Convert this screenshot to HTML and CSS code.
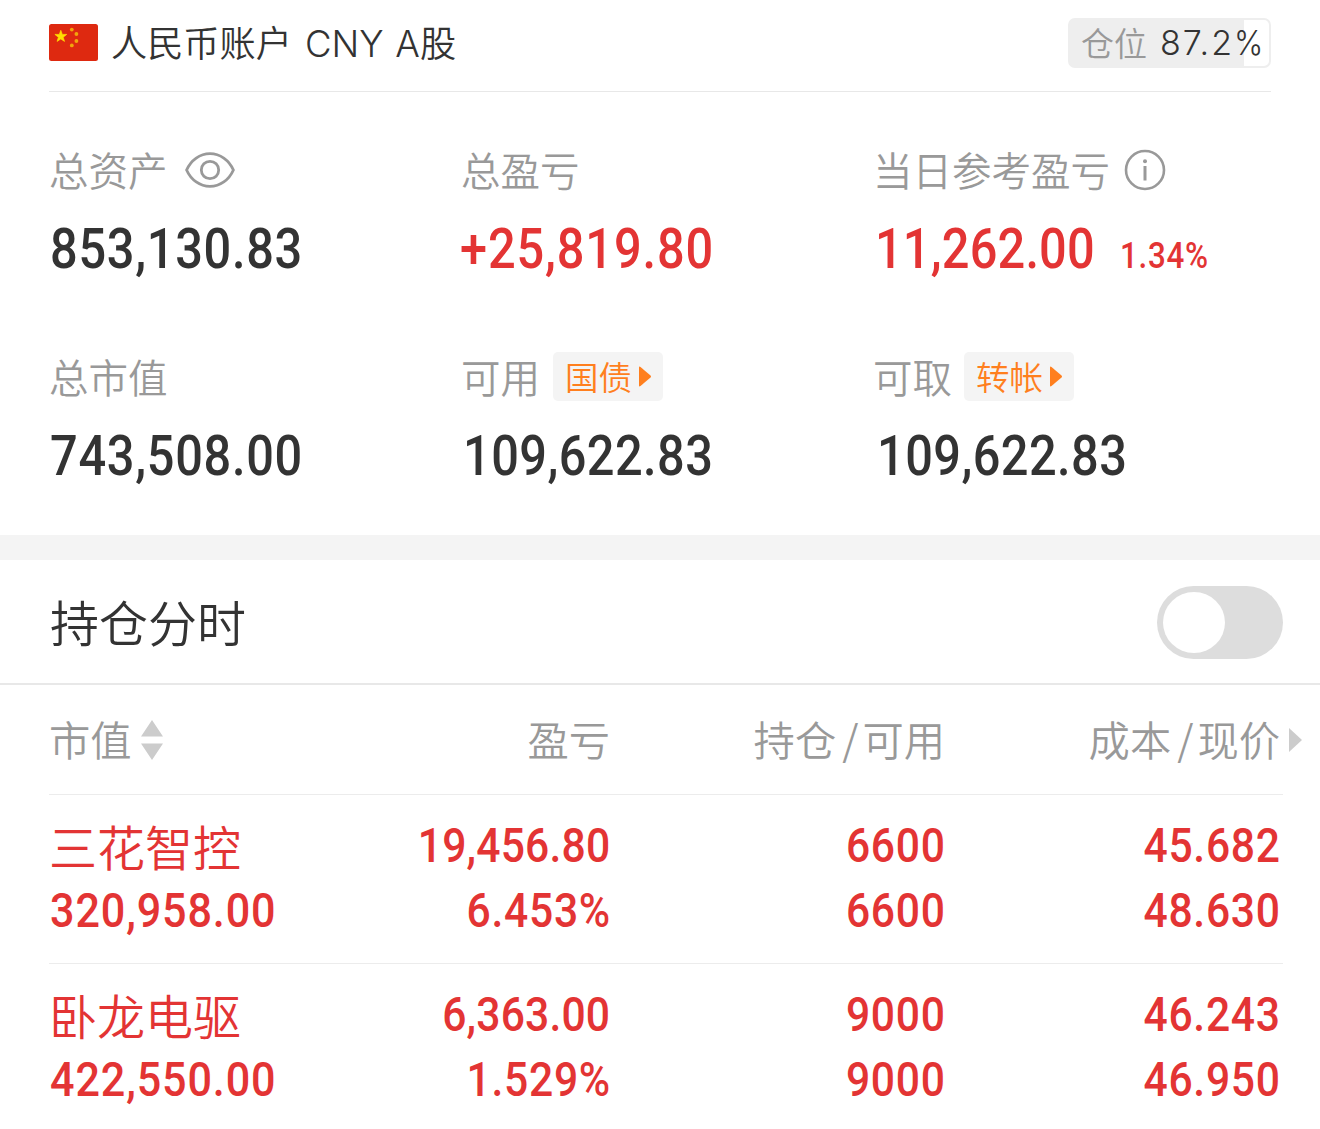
FILE: index.html
```html
<!DOCTYPE html>
<html lang="zh-CN">
<head>
<meta charset="utf-8">
<title>人民币账户</title>
<link rel="stylesheet" href="styles.css">
</head>
<body>
<section class="account">
  <header class="account-head">
    <svg class="flag" viewBox="0 0 49 37" width="49" height="37">
      <rect width="49" height="37" rx="2.5" fill="#de2910"/>
      <path fill="#ffde00" stroke="#ffde00" stroke-width=".7" d="M11.8 6.300l1.500 4.100h4.400l-3.500 2.800 1.300 4.200-3.700-2.500-3.700 2.500 1.300-4.200-3.500-2.800h4.400z"/>
      <g fill="#f2a50c"><circle cx="22.8" cy="5.6" r="1.9"/><circle cx="27.4" cy="10" r="1.9"/><circle cx="27.4" cy="17" r="1.9"/><circle cx="22.8" cy="21.4" r="1.9"/></g>
    </svg>
    <h1 class="account-name">人民币账户<span class="latin">CNY A</span>股</h1>
    <div class="position"><span class="position-label">仓位</span><span class="position-value">87.2<span class="percent">%</span></span></div>
  </header>
  <div class="summary">
    <div class="cell">
      <div class="label"><span class="text">总资产</span>
        <svg class="eye" viewBox="0 0 50 36" width="50" height="36" fill="none" stroke="#999" stroke-width="2.800"><path d="M1.600 18C6 8 15 1.600 25 1.600S44 8 48.400 18C44 28 35 34.400 25 34.400S6 28 1.600 18z"/><circle cx="25" cy="18" r="8.700"/></svg>
      </div>
      <div class="value"><span class="num">853,130.83</span></div>
    </div>
    <div class="cell">
      <div class="label"><span class="text">总盈亏</span></div>
      <div class="value up"><span class="num plus">+25,819.80</span></div>
    </div>
    <div class="cell">
      <div class="label"><span class="text">当日参考盈亏</span>
        <svg class="info" viewBox="0 0 42 42" width="42" height="42" fill="none" stroke="#999" stroke-width="2.600"><circle cx="21" cy="21" r="19"/><path d="M21 17v14.500" stroke-width="3"/><circle cx="21" cy="12.300" r="2" fill="#999" stroke="none"/></svg>
      </div>
      <div class="value up"><span class="num tight today">11,262.00</span><span class="num rate">1.34%</span></div>
    </div>
    <div class="cell">
      <div class="label"><span class="text">总市值</span></div>
      <div class="value"><span class="num">743,508.00</span></div>
    </div>
    <div class="cell">
      <div class="label"><span class="text">可用</span><span class="chip"><span class="text">国债</span><svg viewBox="0 0 12 21" width="12" height="21"><path fill="#ff7f1e" d="M0 1.500Q0 0 1.500 1L11.500 9.500Q12.500 10.500 11.500 11.500L1.500 20Q0 21 0 19.500z"/></svg></span></div>
      <div class="value"><span class="num available">109,622.83</span></div>
    </div>
    <div class="cell">
      <div class="label"><span class="text">可取</span><span class="chip transfer"><span class="text">转帐</span><svg viewBox="0 0 12 21" width="12" height="21"><path fill="#ff7f1e" d="M0 1.500Q0 0 1.500 1L11.500 9.500Q12.500 10.500 11.500 11.500L1.500 20Q0 21 0 19.500z"/></svg></span></div>
      <div class="value"><span class="num available shifted">109,622.83</span></div>
    </div>
  </div>
</section>
<section class="chart-switch">
  <h2 class="switch-title">持仓分时</h2>
  <div class="toggle"><span class="knob"></span></div>
</section>
<section class="holdings">
  <div class="row head">
    <div class="th">市值<svg class="sort" viewBox="0 0 22 40" width="22" height="40" fill="#ccc"><path d="M11 0l11 16.500H0zM0 23.500h22L11 40z"/></svg></div>
    <div class="th end">盈亏</div>
    <div class="th end">持仓<span class="slash">/</span>可用</div>
    <div class="th end">成本<span class="slash">/</span>现价<svg class="more" viewBox="0 0 13 24" width="13" height="24" fill="#ccc"><path d="M0 0l13 12L0 24z"/></svg></div>
  </div>
  <div class="row">
    <div class="td"><span class="stock">三花智控</span><span class="num">320,958.00</span></div>
    <div class="td end"><span class="num tight">19,456.80</span><span class="num">6.453%</span></div>
    <div class="td end"><span class="num">6600</span><span class="num">6600</span></div>
    <div class="td end"><span class="num">45.682</span><span class="num">48.630</span></div>
  </div>
  <div class="row">
    <div class="td"><span class="stock">卧龙电驱</span><span class="num">422,550.00</span></div>
    <div class="td end"><span class="num tight">6,363.00</span><span class="num">1.529%</span></div>
    <div class="td end"><span class="num">9000</span><span class="num">9000</span></div>
    <div class="td end"><span class="num">46.243</span><span class="num">46.950</span></div>
  </div>
</section>
</body>
</html>
```

FILE: styles.css
```css
* { box-sizing: border-box; }

body {
  margin: 0;
  width: 1320px;
  height: 1129px;
  overflow: hidden;
  background: #fff;
  color: #333;
  font-family: "Noto Sans CJK SC", sans-serif;
  font-weight: 350;
}

svg { display: block; flex: none; }
h1, h2 { margin: 0; font-weight: 350; }

.account {
  height: 560px;
  padding: 0 49px;
  border-bottom: 25px solid #f4f4f4;
}

.account-head {
  display: flex;
  align-items: center;
  height: 92px;
  padding-bottom: 6px;
  border-bottom: 1px solid #e8e8e8;
}

.account-name {
  margin-left: 13px;
  font-size: 36.2px;
  line-height: 48px;
  white-space: pre;
}

.latin {
  margin-left: 13px;
  font-family: Inter, sans-serif;
  font-size: 36.5px;
  word-spacing: 1.5px;
}

.position {
  display: flex;
  align-items: center;
  width: 203px;
  height: 50px;
  margin-left: auto;
  padding-left: 11px;
  border: 2px solid #eee;
  border-radius: 7px;
  background: linear-gradient(to right, #eee 87.2%, #fff 87.2%);
  white-space: nowrap;
}

.position-label { padding-bottom: 2px; color: #999; font-size: 33px; line-height: 44px; }

.position-value {
  display: flex;
  margin-left: 13px;
  font-family: Inter, sans-serif;
  font-size: 34px;
  letter-spacing: 2px;
}

.percent {
  transform: scaleX(0.92);
  transform-origin: left center;
}

.summary {
  display: grid;
  grid-template-columns: 412px 412px 398px;
  row-gap: 71px;
  padding-top: 53px;
}

.label {
  display: flex;
  align-items: center;
  height: 49px;
  color: #999;
  font-size: 39.5px;
  line-height: 49px;
  white-space: nowrap;
}

.text { padding-bottom: 3px; }

.eye { margin-left: 17px; }
.info { margin-left: 14px; }

.chip {
  display: flex;
  align-items: center;
  gap: 7px;
  height: 49px;
  margin-left: 13px;
  padding: 0 12px;
  border-radius: 5px;
  background: #f4f4f4;
  color: #ff7f1e;
  font-size: 33.5px;
}

.transfer { margin-left: 12px; }

.value {
  display: flex;
  height: 64px;
  margin-top: 23px;
  font-size: 56px;
  line-height: 64px;
}

.num {
  display: block;
  margin-left: 1px;
  font-family: Roboto, sans-serif;
  font-weight: 500;
  letter-spacing: 0.8px;
  white-space: nowrap;
  transform: scaleX(0.87);
  transform-origin: left center;
}

.tight { letter-spacing: 0.2px; }

.up { color: #e33434; }
.plus { margin-left: -1px; letter-spacing: 1px; }
.today { margin-left: 2px; }
.available { margin-left: 2px; letter-spacing: 0.5px; }
.shifted { margin-left: 4px; }
.rate { margin-left: -8px; padding-top: 7px; font-size: 36px; }

.chart-switch {
  display: flex;
  align-items: center;
  justify-content: space-between;
  height: 125px;
  padding: 0 37px 0 50px;
  border-bottom: 2px solid #e8e8e8;
}

.switch-title { padding-bottom: 2px; font-size: 49px; line-height: 60px; }

.toggle {
  width: 126px;
  height: 73px;
  margin-top: 2px;
  padding: 6px;
  border-radius: 37px;
  background: #ddd;
}

.knob {
  display: block;
  width: 62px;
  height: 61px;
  border-radius: 50%;
  background: #fff;
}

.holdings { padding: 0 37px 0 49px; }

.row {
  display: grid;
  grid-template-columns: 281px 280px 335px 335px;
  height: 169px;
  padding-top: 18px;
  border-bottom: 1px solid #ececec;
}

.row:last-child { border-bottom: 0; }

.head {
  height: 110px;
  padding-top: 23px;
}

.th {
  position: relative;
  display: flex;
  align-items: center;
  height: 60px;
  color: #999;
  font-size: 41.3px;
  line-height: 60px;
}

.end { justify-content: flex-end; }
.sort { margin: 3px 0 0 9px; }
.slash { margin: 0 4px 0 6px; }

.more {
  position: absolute;
  left: 100%;
  margin: 3px 0 0 9px;
}

.td {
  display: flex;
  flex-direction: column;
  justify-content: flex-start;
  color: #e33434;
  font-size: 49px;
  line-height: 65px;
}

.td:first-child .num { transform: scaleX(0.88); letter-spacing: 1px; }
.td.end { align-items: flex-end; }
.td.end .num { margin-right: -1px; transform-origin: right center; }
.td.end .tight { margin-right: 0; }
.stock { font-size: 48px; height: 65px; }
```
